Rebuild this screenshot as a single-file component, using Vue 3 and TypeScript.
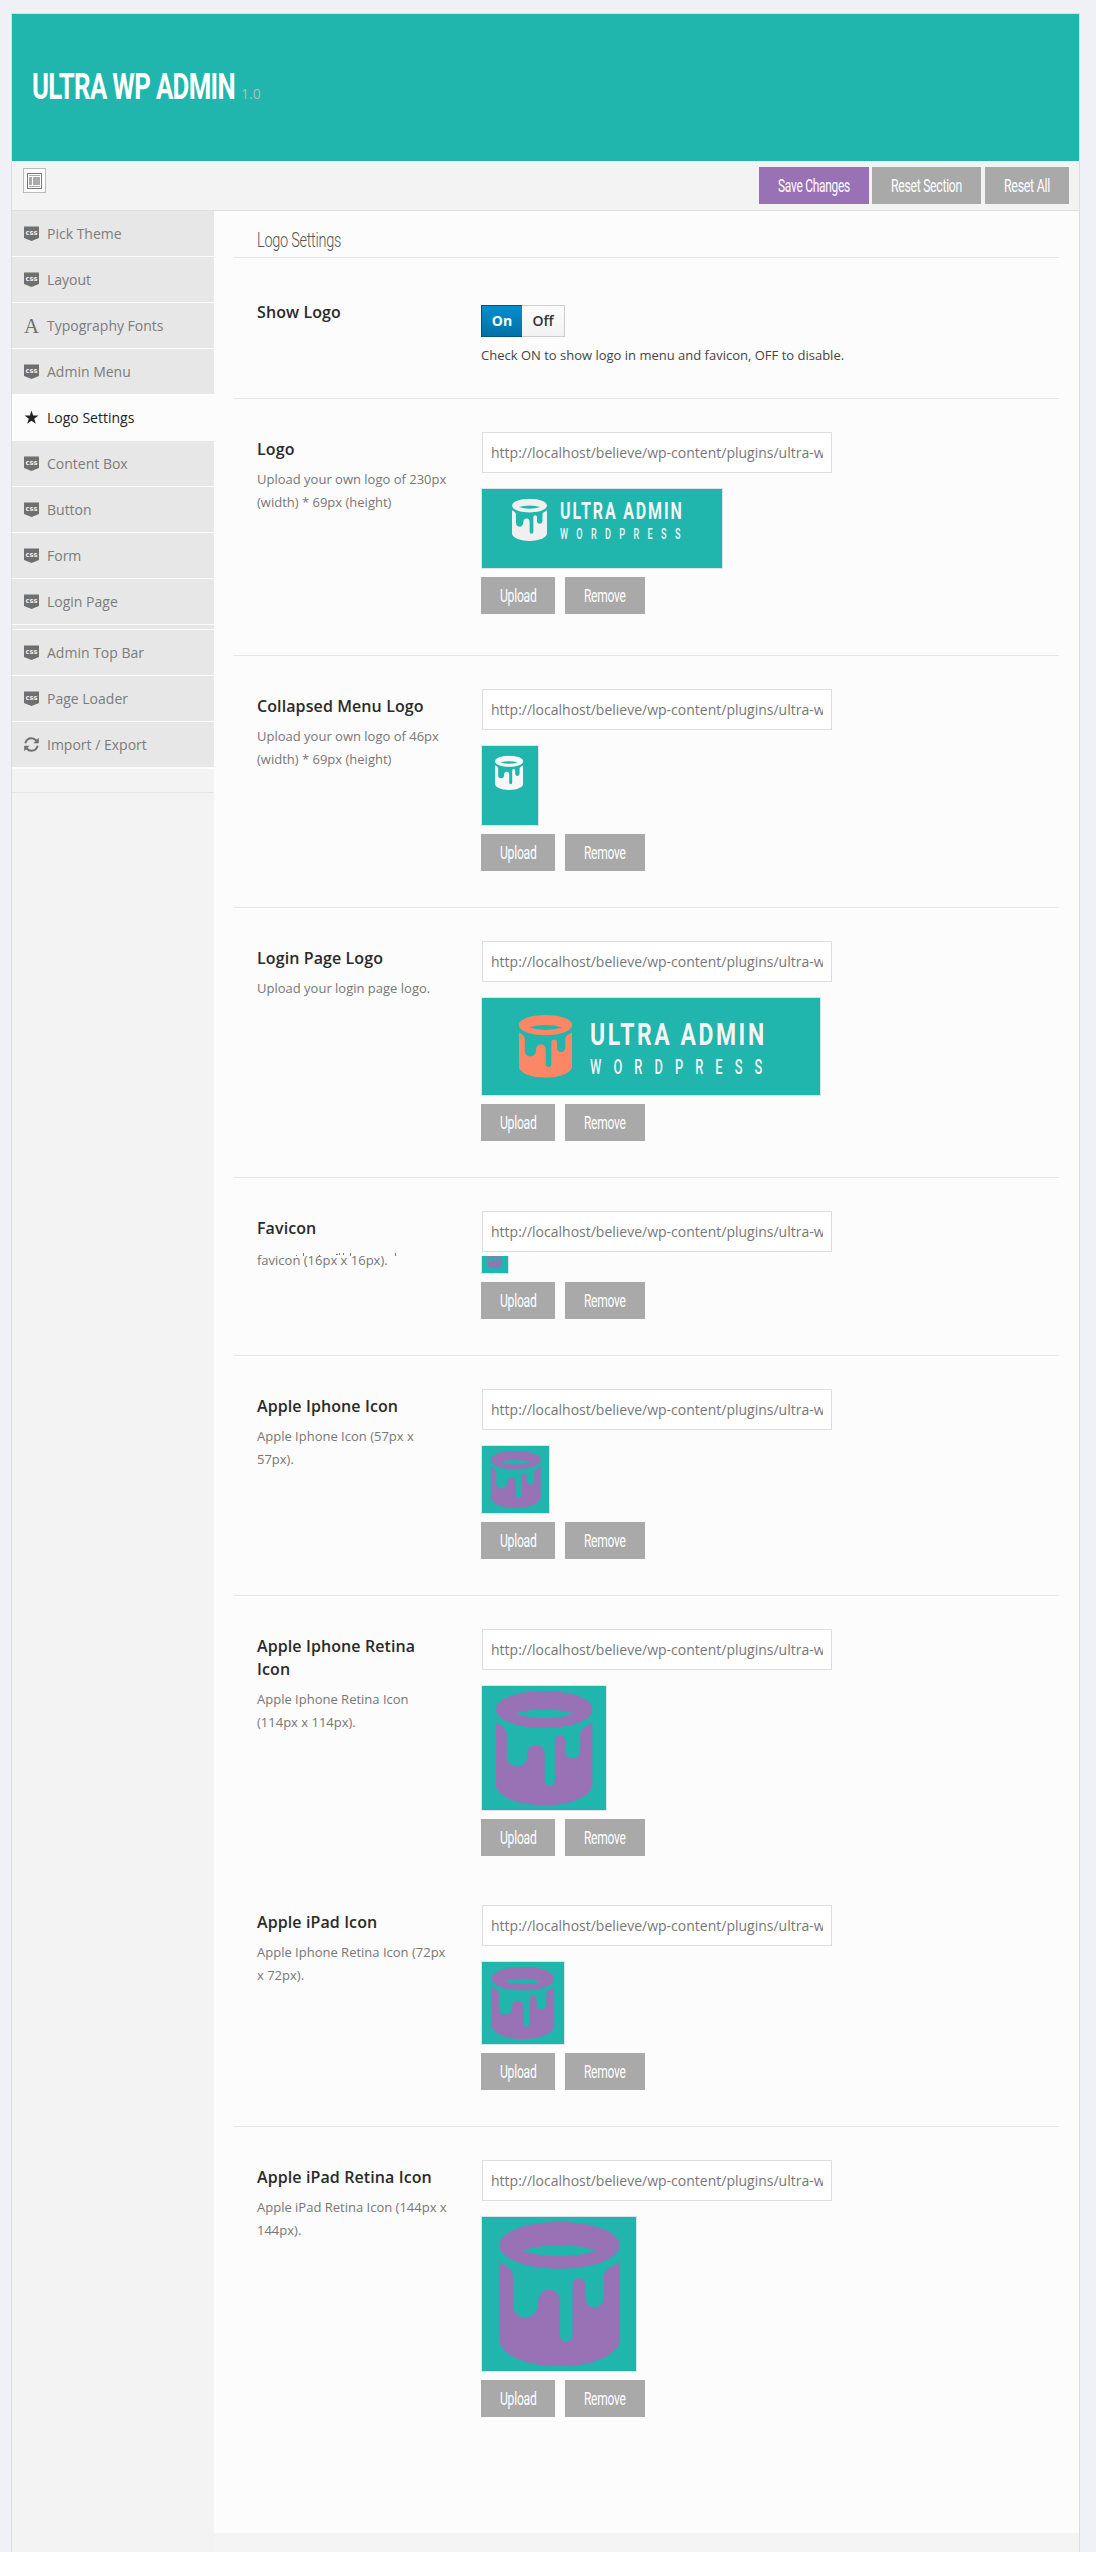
<script setup lang="ts">
import { defineComponent, h } from 'vue'

interface MenuItem {
  label: string
  icon: 'css' | 'font' | 'star' | 'refresh'
  active?: boolean
  gap?: boolean
}

interface Field {
  title: string[]
  desc: string[]
  width: number
  height: number
  gap: number
  after: number
  line: boolean
  color: string
  bucket: [number, number, number, number]
  brand?: { x: number; w: number; y1: number; s1: number; y2: number; s2: number; l1: number; l2: number }
  clipped?: boolean
}

// Condensed caption: fits the text to an exact width.
const Condensed = defineComponent({
  props: {
    text: { type: String, required: true },
    w: { type: Number, required: true },
    size: { type: Number, required: true },
    y: { type: Number, required: true },
    height: { type: Number, required: true },
    weight: { type: Number, default: 400 },
    spacing: { type: Number, default: -0.4 },
  },
  setup(p) {
    return () =>
      h('svg', { width: p.w, height: p.height, style: 'display:block;overflow:visible' }, [
        h(
          'text',
          {
            x: 0,
            y: p.y,
            textLength: p.w,
            lengthAdjust: 'spacingAndGlyphs',
            fill: 'currentColor',
            'font-family': 'Roboto, "Open Sans", sans-serif',
            'font-size': p.size,
            'font-weight': p.weight,
            'letter-spacing': p.spacing,
          },
          p.text,
        ),
      ])
  },
})

const menu: MenuItem[] = [
  { label: 'Pick Theme', icon: 'css' },
  { label: 'Layout', icon: 'css' },
  { label: 'Typography Fonts', icon: 'font' },
  { label: 'Admin Menu', icon: 'css' },
  { label: 'Logo Settings', icon: 'star', active: true },
  { label: 'Content Box', icon: 'css' },
  { label: 'Button', icon: 'css' },
  { label: 'Form', icon: 'css' },
  { label: 'Login Page', icon: 'css', gap: true },
  { label: 'Admin Top Bar', icon: 'css' },
  { label: 'Page Loader', icon: 'css' },
  { label: 'Import / Export', icon: 'refresh' },
]

const url = 'http://localhost/believe/wp-content/plugins/ultra-w'
const purple = '#9972b5'

const fields: Field[] = [
  {
    title: ['Logo'], desc: ['Upload your own logo of 230px', '(width) * 69px (height)'],
    width: 242, height: 81, gap: 15, after: 41, line: true, color: '#f0f0f0', bucket: [30, 9.7, 35, 42.3],
    brand: { x: 78, w: 122, y1: 29.7, s1: 23, y2: 50.3, s2: 14.2, l1: 2.6, l2: 13 },
  },
  {
    title: ['Collapsed Menu Logo'], desc: ['Upload your own logo of 46px', '(width) * 69px (height)'],
    width: 58, height: 81, gap: 15, after: 36, line: true, color: '#f7f7f7', bucket: [13, 9.7, 28.2, 34.3],
  },
  {
    title: ['Login Page Logo'], desc: ['Upload your login page logo.'],
    width: 340, height: 99, gap: 15, after: 36, line: true, color: '#fb8766', bucket: [36.8, 17, 53.4, 62.7],
    brand: { x: 108, w: 174.5, y1: 47, s1: 32.2, y2: 76.3, s2: 20.2, l1: 3.6, l2: 19 },
  },
  {
    title: ['Favicon'], desc: ['favicon (16px x 16px).'],
    width: 28, height: 18, gap: 4, after: 36, line: true, color: purple, bucket: [6, -4, 13.5, 16], clipped: true,
  },
  {
    title: ['Apple Iphone Icon'], desc: ['Apple Iphone Icon (57px x', '57px).'],
    width: 69, height: 69, gap: 15, after: 36, line: true, color: purple, bucket: [8.6, 4.9, 50.2, 57],
  },
  {
    title: ['Apple Iphone Retina', 'Icon'], desc: ['Apple Iphone Retina Icon', '(114px x 114px).'],
    width: 126, height: 126, gap: 15, after: 15, line: false, color: purple, bucket: [14, 5, 96.6, 114.3],
  },
  {
    title: ['Apple iPad Icon'], desc: ['Apple Iphone Retina Icon (72px', 'x 72px).'],
    width: 84, height: 84, gap: 15, after: 36, line: true, color: purple, bucket: [9.8, 5, 62.6, 72],
  },
  {
    title: ['Apple iPad Retina Icon'], desc: ['Apple iPad Retina Icon (144px x', '144px).'],
    width: 156, height: 156, gap: 15, after: 116, line: false, color: purple, bucket: [17.5, 5, 120, 144.3],
  },
]
</script>

<template>
  <div class="page">
    <svg class="defs" width="0" height="0">
      <symbol id="bucket" viewBox="17.5 5 120 144.3" preserveAspectRatio="none">
        <path
          fill-rule="evenodd"
          d="M77.5 5C112 5 137.5 15 137.5 28.3S112 51.7 77.5 51.7 17.5 41.5 17.5 28.3 43 5 77.5 5ZM40.4 33.7Q58 28.3 77.5 28.3T114.7 33.7Q97 39.3 77.5 39.3T40.4 33.7Z"
        />
        <path
          d="M17.5 44.7C26 50 31 52 31 60V88C31 96 37 100.3 43.7 100.3S56.3 95 56.3 86C56.3 78 60 72.7 67.3 72.7S78 78 78 86V118C78 122.5 81 124.7 84.3 124.7S90.6 122.5 90.6 118V68C90.6 64 93.5 61.3 97 61.3S103.3 64 103.3 68V80C103.3 86.5 107.3 90.3 112.5 90.3S122 86.5 122 80V60C122 52 128 51 137.5 44.7V123C137.5 137 112 149.3 77.5 149.3S17.5 137 17.5 123Z"
        />
      </symbol>
    </svg>

    <div class="panel">
      <header class="banner">
        <Condensed text="ULTRA WP ADMIN" :w="203" :size="36.8" :y="85" :height="147" :weight="700" :spacing="-0.9" />
        <span class="version">1.0</span>
      </header>

      <div class="toolbar">
        <button class="expand" type="button">
          <svg width="15" height="16" viewBox="0 0 15 16">
            <rect x="0.5" y="0.5" width="14" height="15" fill="#fff" stroke="#777" />
            <path d="M2 2.5h11M2 13.5h11" stroke="#aaa" />
            <path d="M2 4h3v8H2zM6 4h7v8H6z" fill="#aaa" />
          </svg>
        </button>
        <div class="actions">
          <button class="btn save" type="button"><Condensed text="Save Changes" :w="72" :size="18" :y="25" :height="37" /></button>
          <button class="btn section" type="button"><Condensed text="Reset Section" :w="71" :size="18" :y="25" :height="37" /></button>
          <button class="btn all" type="button"><Condensed text="Reset All" :w="46" :size="18" :y="25" :height="37" /></button>
        </div>
      </div>

      <div class="body">
        <nav class="sidebar">
          <a v-for="item in menu" :key="item.label" :class="['item', { active: item.active, gap: item.gap }]">
            <svg class="glyph" width="15" height="15" viewBox="0 0 15 15">
              <template v-if="item.icon === 'css'">
                <path d="M0 0h15v12l-7.5 3L0 12z" fill="#6f6f6f" />
                <path d="M0 0h15v1H0z" fill="#aaa" />
                <text x="1.5" y="8.8" textLength="12" lengthAdjust="spacingAndGlyphs" class="css">css</text>
              </template>
              <text v-else-if="item.icon === 'font'" x="0" y="15" textLength="15" lengthAdjust="spacingAndGlyphs" class="letter">A</text>
              <path v-else-if="item.icon === 'star'" fill="#222" d="M7.5.5 9.1 5.5h5.4l-4.3 3.2 1.6 5.1-4.3-3.1-4.3 3.1 1.6-5.1L.5 5.5h5.4z" />
              <template v-else>
                <path d="M1.3 6.2C2.2 3 4.6 1.3 7.5 1.3c2 0 3.6.8 4.9 2.2M13.7 8.8c-.9 3.2-3.3 4.9-6.2 4.9-2 0-3.6-.8-4.9-2.2" fill="none" stroke="#6f6f6f" stroke-width="2" />
                <path d="M14.8.8v5.4H9.4zM.2 14.2V8.8h5.4z" fill="#6f6f6f" />
              </template>
            </svg>
            <span>{{ item.label }}</span>
          </a>
          <div class="tail"></div>
        </nav>

        <main class="content">
          <h2 class="heading"><Condensed text="Logo Settings" :w="84" :size="20.5" :y="35.5" :height="46" :weight="300" /></h2>

          <section class="row first">
            <div class="label"><h3>Show Logo</h3></div>
            <div class="control">
              <div class="switch"><span class="on">On</span><span class="off">Off</span></div>
              <p class="help">Check ON to show logo in menu and favicon, OFF to disable.</p>
            </div>
          </section>

          <section
            v-for="f in fields"
            :key="f.title.join(' ')"
            :class="['row', { line: f.line }]"
            :style="{ paddingBottom: f.after + 'px' }"
          >
            <div class="label">
              <h3><span v-for="t in f.title" :key="t">{{ t }}</span></h3>
              <p :class="{ clipped: f.clipped }">
                <span v-for="d in f.desc" :key="d">{{ d }}</span>
                <svg v-if="f.clipped" class="ticks" width="145" height="5">
                  <path d="M39.5 2v1M46.5 0v3M62.5 2v2M79 1.5h2M82.5 0v2M86.5 0v2M93.5 0v3M138.5 0v3" stroke="#777" fill="none" />
                </svg>
              </p>
            </div>
            <div class="control">
              <div class="input"><span>{{ url }}</span></div>
              <div
                :class="['preview', { cut: f.clipped }]"
                :style="{ width: f.width + 'px', height: f.height + 'px', marginTop: f.gap + 'px' }"
              >
                <svg :width="f.width - 2" :height="f.clipped ? f.height - 1 : f.height - 2">
                  <use href="#bucket" :x="f.bucket[0]" :y="f.bucket[1]" :width="f.bucket[2]" :height="f.bucket[3]" :fill="f.color" />
                  <g v-if="f.brand" fill="#f4f4f4" class="brand">
                    <text
                      :x="f.brand.x" :y="f.brand.y1" :font-size="f.brand.s1" font-weight="700"
                      :textLength="f.brand.w + f.brand.l1 * 0.6" lengthAdjust="spacingAndGlyphs" :letter-spacing="f.brand.l1"
                    >ULTRA ADMIN</text>
                    <text
                      :x="f.brand.x" :y="f.brand.y2" :font-size="f.brand.s2" font-weight="500"
                      :textLength="f.brand.w + f.brand.l2 * 0.52" lengthAdjust="spacingAndGlyphs" :letter-spacing="f.brand.l2"
                    >WORDPRESS</text>
                  </g>
                </svg>
              </div>
              <div class="pair">
                <button class="btn upload" type="button"><Condensed text="Upload" :w="36.5" :size="18" :y="25" :height="37" /></button>
                <button class="btn remove" type="button"><Condensed text="Remove" :w="41.5" :size="18" :y="25" :height="37" /></button>
              </div>
            </div>
          </section>
        </main>
      </div>
    </div>
  </div>
</template>

<style>
body {
  margin: 0;
  background: #f0f1f7;
}
</style>

<style scoped>
.page {
  box-sizing: border-box;
  width: 1096px;
  height: 2552px;
  padding: 13px 16px 0 11px;
  overflow: hidden;
  background: #f0f1f7;
  font-family: 'Open Sans', sans-serif;
}
.defs {
  position: absolute;
}
.panel {
  box-sizing: border-box;
  height: 2540px;
  display: flex;
  flex-direction: column;
  border: 1px solid #dcdde0;
  background: #f4f4f4;
}
.banner {
  flex: none;
  display: flex;
  gap: 6px;
  height: 147px;
  padding-left: 20px;
  background: #20b5ad;
  color: #fff;
  border-bottom: 1px solid #fff;
}
.version {
  margin-top: 70px;
  line-height: 20px;
  font-size: 14px;
  color: #b0bebc;
}
.toolbar {
  flex: none;
  box-sizing: border-box;
  display: flex;
  justify-content: space-between;
  height: 49px;
  padding: 5px 10px 0 11px;
  background: #f3f3f3;
  border-bottom: 1px solid #dedede;
}
.expand {
  box-sizing: border-box;
  width: 23px;
  height: 25px;
  margin: 1px 0 0;
  padding: 0;
  display: flex;
  align-items: center;
  justify-content: center;
  border: 1px solid #bbb;
  background: #fcfcfc;
}
.actions {
  display: flex;
}
.btn {
  height: 37px;
  padding: 0;
  border: 0;
  display: flex;
  justify-content: center;
  background: #a9a9a9;
  color: #fff;
}
.save {
  width: 110px;
  margin-right: 3px;
  background: #9972b5;
}
.section {
  width: 109px;
  margin-right: 4px;
}
.all {
  width: 84px;
}
.body {
  flex: none;
  display: flex;
  align-items: stretch;
  height: 2341px;
}
.sidebar {
  width: 202px;
  background: #f3f3f3;
}
.item {
  box-sizing: border-box;
  display: flex;
  align-items: center;
  gap: 8px;
  height: 46px;
  padding-left: 12px;
  border-bottom: 1px solid #fcfcfc;
  background: #e7e7e7;
  color: #7c7c7c;
  font-size: 14px;
  line-height: 20px;
}
.item.active {
  background: #fcfcfc;
  color: #222;
}
.item.gap + .item {
  height: 51px;
  padding-top: 5px;
  background: linear-gradient(#e7e7e7 4px, #fcfcfc 4px, #fcfcfc 5px, #e7e7e7 5px);
}
.item:nth-last-child(2) {
  height: 47px;
  border-bottom-width: 2px;
}
.tail {
  height: 23px;
  border-bottom: 1px solid #e5e5e5;
}
.css {
  font: 700 7px 'DejaVu Sans', sans-serif;
  fill: #eee;
}
.letter {
  font: 21px 'Liberation Serif', serif;
  fill: #6f6f6f;
}
.glyph {
  flex: none;
  overflow: visible;
}
.content {
  box-sizing: border-box;
  flex: 1;
  height: 2322px;
  padding: 0 20px;
  background: #fcfcfc;
}
.heading {
  margin: 0;
  padding-left: 23px;
  height: 46px;
  border-bottom: 1px solid #e6e6e6;
  color: #555;
}
.row {
  display: flex;
  padding: 33px 0 0 23px;
}
.row.line,
.row.first {
  border-bottom: 1px solid #e6e6e6;
}
.row.first {
  box-sizing: border-box;
  height: 141px;
  padding-top: 47px;
}
.row:not(.line):not(.first) + .row {
  padding-top: 34px;
}
.label {
  width: 224px;
  flex: none;
}
h3 {
  margin: 6px 0 7px;
  font-size: 16px;
  font-weight: 650;
  letter-spacing: 0.1px;
  line-height: 23px;
  color: #2a2a2a;
}
.first h3 {
  margin-top: -4px;
}
h3 span,
.label p span {
  display: block;
  white-space: nowrap;
}
.label p {
  margin: 0;
  font-size: 13px;
  line-height: 23px;
  color: #777;
}
.label p.clipped {
  position: relative;
  top: 2px;
}
.clipped span {
  clip-path: inset(6px 0 0 0);
}
.ticks {
  position: absolute;
  left: 0;
  top: 4px;
}
.control {
  flex: 1;
}
.switch {
  box-sizing: border-box;
  display: flex;
  width: 84px;
  height: 32px;
  font-size: 14px;
  font-weight: 600;
  line-height: 30px;
}
.on,
.off {
  box-sizing: border-box;
  height: 32px;
  text-align: center;
}
.on {
  width: 41px;
  border: 1px solid #00557f;
  border-right: 0;
  background: linear-gradient(#0090cc, #0070a6);
  color: #fff;
  font-weight: 700;
}
.off {
  width: 43px;
  border: 1px solid #ccc;
  border-left: 0;
  background: linear-gradient(#fcfcfc, #f2f2f2);
  color: #333;
}
.help {
  margin: 7px 0 0;
  font-size: 13px;
  line-height: 23px;
  color: #444;
}
.input {
  box-sizing: border-box;
  width: 350px;
  height: 41px;
  margin-left: 1px;
  padding: 0 8px;
  border: 1px solid #ddd;
  background: #fff;
  font-size: 14px;
  line-height: 39px;
  color: #777;
}
.input span {
  display: block;
  overflow: hidden;
  white-space: nowrap;
}
.preview {
  box-sizing: border-box;
  border: 1px solid #dde3e3;
  background: #20b5ad;
}
.preview svg {
  display: block;
  overflow: hidden;
}
.preview.cut {
  border-top: 0;
}
.brand {
  font-family: Roboto, 'Open Sans', sans-serif;
}
.pair {
  display: flex;
  gap: 10px;
  margin-top: 8px;
}
.upload {
  width: 74px;
}
.remove {
  width: 80px;
}
</style>
